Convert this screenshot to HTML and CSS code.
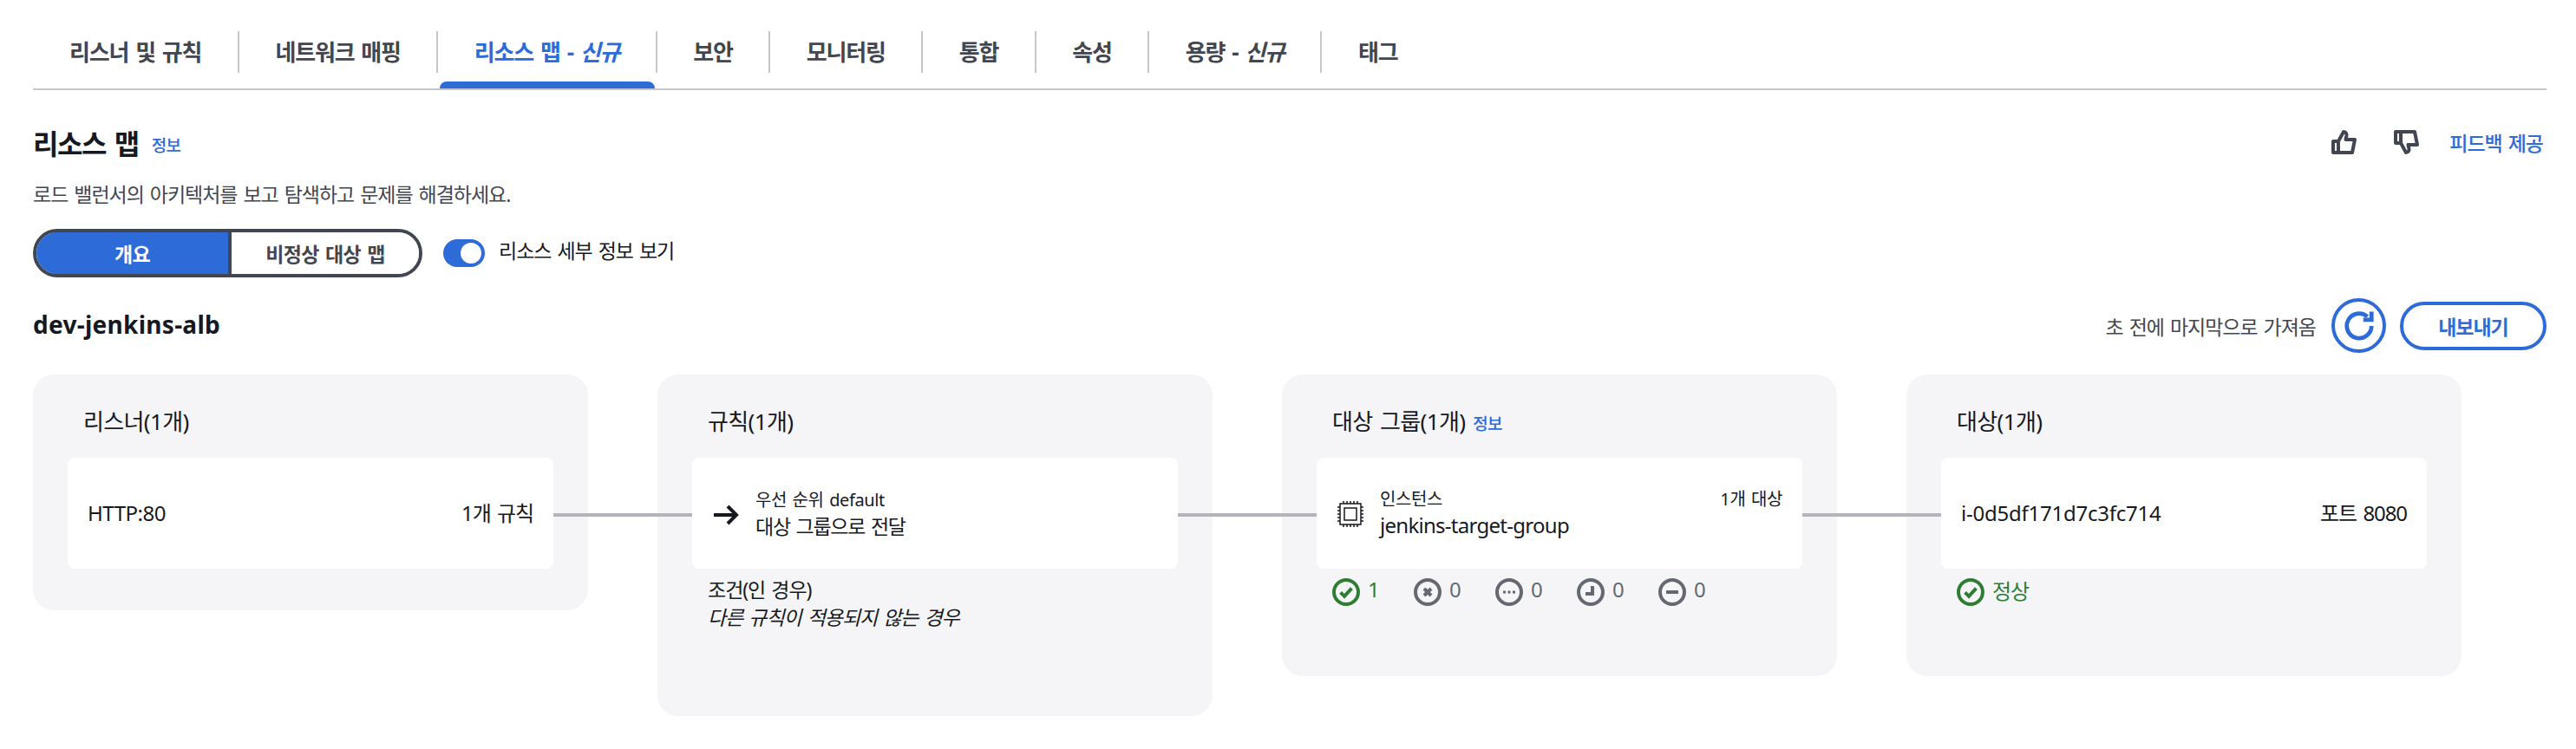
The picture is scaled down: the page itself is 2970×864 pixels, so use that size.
FILE: index.html
```html
<!DOCTYPE html>
<html lang="ko">
  <head>
    <meta charset="UTF-8" />
    <title>리소스 맵</title>
    <link rel="stylesheet" href="styles.css">
  </head>

  <body>
    <div class="page">
      <div class="tabs">
        <a class="tab">리스너 및 규칙</a>
        <a class="tab">네트워크 매핑</a>
        <a class="tab active">리소스 맵 - <em>신규</em></a>
        <a class="tab">보안</a>
        <a class="tab">모니터링</a>
        <a class="tab">통합</a>
        <a class="tab">속성</a>
        <a class="tab">용량 - <em>신규</em></a>
        <a class="tab">태그</a>
      </div>

      <div class="heading-row">
        <div class="heading">
          <h2>리소스 맵</h2>
          <a class="info">정보</a>
        </div>
        <div class="feedback">
          <svg class="icon-feedback" viewBox="0 0 16 16">
            <path d="M1.5 7.5h3V14h-3zM4.5 7.5 7.5 2c1.5 0 2 1.4 1.7 2.5L8.7 6.5H14L12.5 14h-8" />
          </svg>
          <svg class="icon-feedback" viewBox="0 0 16 16">
            <g transform="translate(0 16) scale(1 -1)">
              <path d="M1.5 7.5h3V14h-3zM4.5 7.5 7.5 2c1.5 0 2 1.4 1.7 2.5L8.7 6.5H14L12.5 14h-8" />
            </g>
          </svg>
          <a class="feedback-link">피드백 제공</a>
        </div>
      </div>

      <p class="description">로드 밸런서의 아키텍처를 보고 탐색하고 문제를 해결하세요.</p>

      <div class="controls">
        <div class="segments">
          <button class="segment selected">개요</button>
          <button class="segment">비정상 대상 맵</button>
        </div>
        <span class="toggle"><span class="toggle-knob"></span></span>
        <span class="toggle-label">리소스 세부 정보 보기</span>
      </div>

      <div class="lb-row">
        <h3>dev-jenkins-alb</h3>
        <div class="lb-actions">
          <span class="fetched">초 전에 마지막으로 가져옴</span>
          <button class="refresh">
            <svg viewBox="0 0 16 16">
              <path d="M14 8a6 6 0 1 1-2-4.5" />
              <path d="M14 1v4h-4" />
            </svg>
          </button>
          <button class="export">내보내기</button>
        </div>
      </div>

      <div class="map">
        <section class="card">
          <div class="card-title">리스너(1개)</div>
          <div class="node linked">
            <span class="latin">HTTP:80</span>
            <span>1개 규칙</span>
          </div>
        </section>

        <section class="card">
          <div class="card-title">규칙(1개)</div>
          <div class="node linked">
            <div class="node-main">
              <svg class="icon-arrow" viewBox="0 0 16 12">
                <path d="M1 6h13M9 1l5 5-5 5" />
              </svg>
              <div>
                <div class="node-small">우선 순위 default</div>
                <div class="node-action">대상 그룹으로 전달</div>
              </div>
            </div>
          </div>
          <div class="conditions">
            <div>조건(인 경우)</div>
            <div class="conditions-value">다른 규칙이 적용되지 않는 경우</div>
          </div>
        </section>

        <section class="card">
          <div class="card-title">대상 그룹(1개) <a class="info">정보</a></div>
          <div class="node linked node-top">
            <div class="node-main">
              <svg class="icon-chip" viewBox="0 0 32 32">
                <rect x="4" y="4" width="24" height="24" />
                <rect x="9" y="9" width="14" height="14" />
                <path d="M8 1v3M12 1v3M16 1v3M20 1v3M24 1v3M8 28v3M12 28v3M16 28v3M20 28v3M24 28v3M1 8h3M1 12h3M1 16h3M1 20h3M1 24h3M28 8h3M28 12h3M28 16h3M28 20h3M28 24h3" />
              </svg>
              <div>
                <div class="node-small">인스턴스</div>
                <div class="group-name">jenkins-target-group</div>
              </div>
            </div>
            <span class="node-small">1개 대상</span>
          </div>
          <div class="statuses">
            <div class="status ok">
              <svg viewBox="0 0 16 16"><circle cx="8" cy="8" r="7" /><path d="M4.8 8.2 7 10.4l4.2-4.6" /></svg>
              <span>1</span>
            </div>
            <div class="status">
              <svg viewBox="0 0 16 16"><circle cx="8" cy="8" r="7" /><path d="M6 6l4 4M10 6l-4 4" /></svg>
              <span>0</span>
            </div>
            <div class="status">
              <svg viewBox="0 0 16 16"><circle cx="8" cy="8" r="7" /><path class="dots" d="M4.5 8h1.5M7.25 8h1.5M10 8h1.5" /></svg>
              <span>0</span>
            </div>
            <div class="status">
              <svg viewBox="0 0 16 16"><circle cx="8" cy="8" r="7" /><path d="M9 4.5V9H5" /></svg>
              <span>0</span>
            </div>
            <div class="status">
              <svg viewBox="0 0 16 16"><circle cx="8" cy="8" r="7" /><path d="M4.5 8h7" /></svg>
              <span>0</span>
            </div>
          </div>
        </section>

        <section class="card">
          <div class="card-title">대상(1개)</div>
          <div class="node">
            <span class="instance-id">i-0d5df171d7c3fc714</span>
            <span>포트 8080</span>
          </div>
          <div class="statuses">
            <div class="status ok">
              <svg viewBox="0 0 16 16"><circle cx="8" cy="8" r="7" /><path d="M4.8 8.2 7 10.4l4.2-4.6" /></svg>
              <span>정상</span>
            </div>
          </div>
        </section>
      </div>
    </div>
  </body>
</html>
```

FILE: styles.css
```css
body {
  margin: 0;
  background: #ffffff;
  color: #16191f;
  font-family: "Noto Sans", "Noto Sans CJK KR", sans-serif;
  font-size: 23px;
}

/* the korean glyphs in the screenshot are narrower than Noto's */
body * {
  letter-spacing: -0.045em;
  word-spacing: 0.09em;
}

.page {
  padding: 0 34px 0 38px;
}

/* tabs */
.tabs {
  display: flex;
  padding: 36px 0 18px;
  border-bottom: 2px solid #c6c6cd;
}

.tab {
  position: relative;
  padding: 0 41.5px;
  line-height: 48px;
  font-size: 26px;
  font-weight: 700;
  color: #424650;
  border-left: 2px solid #c6c6cd;
  white-space: pre;
}

.tab:first-child {
  border-left: none;
  padding-left: 42px;
}

.tab.active {
  color: #2d6bd9;
}

.tab.active::after {
  content: "";
  position: absolute;
  left: 2px;
  right: 1px;
  bottom: -18px;
  height: 8px;
  border-radius: 8px 8px 0 0;
  background: #2d6bd9;
}

/* heading */
.heading-row {
  display: flex;
  justify-content: space-between;
  align-items: center;
  height: 40px;
  margin-top: 40px;
}

.heading {
  display: flex;
  align-items: center;
  gap: 15px;
}

h2 {
  margin: 0;
  font-size: 32px;
  font-weight: 700;
}

.info {
  color: #2d6bd9;
  font-size: 19px;
  font-weight: 500;
  margin-top: 6px;
}

.feedback {
  display: flex;
  align-items: center;
  padding-right: 4px;
}

.icon-feedback {
  width: 32px;
  height: 32px;
  margin-right: 40px;
  fill: none;
  stroke: #424650;
  stroke-width: 2;
  stroke-linejoin: round;
}

.icon-feedback + .icon-feedback {
  margin-right: 33px;
}

.feedback-link {
  color: #2d6bd9;
  font-size: 23px;
  font-weight: 500;
}

.description {
  margin: 24px 0 0;
  line-height: 32px;
  color: #424650;
}

/* segmented control and toggle */
.controls {
  display: flex;
  align-items: center;
  margin-top: 24px;
}

.segments {
  display: flex;
  width: 449px;
  height: 56px;
  box-sizing: border-box;
  border: 4px solid #424650;
  border-radius: 28px;
  overflow: hidden;
}

.segment {
  border: none;
  background: #ffffff;
  color: #424650;
  font-family: inherit;
  font-size: 23px;
  font-weight: 700;
  letter-spacing: -0.03em;
  padding: 0;
  flex: 1;
}

.segment.selected {
  flex: none;
  width: 221px;
  margin-right: 4px;
  background: #2d6bd9;
  color: #ffffff;
  box-shadow: 4px 0 0 #424650;
}

.toggle {
  display: flex;
  justify-content: flex-end;
  align-items: center;
  width: 48px;
  height: 32px;
  box-sizing: border-box;
  padding-right: 4px;
  margin-left: 24px;
  border-radius: 16px;
  background: #2d6bd9;
}

.toggle-knob {
  width: 24px;
  height: 24px;
  border-radius: 50%;
  background: #ffffff;
}

.toggle-label {
  margin: -8px 0 0 16px;
}

/* load balancer row */
.lb-row {
  display: flex;
  justify-content: space-between;
  align-items: center;
  margin-top: 24px;
}

h3 {
  margin: 0 0 4px;
  font-size: 28px;
  font-weight: 700;
  letter-spacing: 0.01em;
}

.lb-actions {
  display: flex;
  align-items: center;
}

.fetched {
  color: #424650;
}

.refresh {
  display: flex;
  align-items: center;
  justify-content: center;
  width: 63px;
  height: 63px;
  margin-left: 18px;
  padding: 0;
  border: 4px solid #2d6bd9;
  border-radius: 50%;
  background: #ffffff;
}

.refresh svg {
  width: 38px;
  height: 38px;
  fill: none;
  stroke: #2d6bd9;
  stroke-width: 2;
}

.export {
  width: 169px;
  height: 56px;
  margin-left: 16px;
  padding: 0;
  border: 4px solid #2d6bd9;
  border-radius: 28px;
  background: #ffffff;
  color: #2d6bd9;
  font-family: inherit;
  font-size: 23px;
  font-weight: 700;
}

/* resource map */
.map {
  display: grid;
  grid-template-columns: repeat(4, 640px);
  gap: 80px;
  align-items: start;
  margin-top: 25px;
}

.card {
  padding: 0 40px 48px;
  border-radius: 24px;
  background: #f5f5f7;
}

.card-title {
  display: flex;
  align-items: center;
  gap: 9px;
  height: 86px;
  padding: 10px 18px 0;
  font-size: 26px;
  letter-spacing: -0.025em;
}

.node {
  position: relative;
  display: flex;
  justify-content: space-between;
  align-items: center;
  height: 128px;
  padding: 0 23px;
  box-sizing: border-box;
  border-radius: 8px;
  background: #ffffff;
  font-size: 24px;
  line-height: 30px;
}

.node.linked::after {
  content: "";
  position: absolute;
  left: 100%;
  top: 64px;
  width: 160px;
  height: 4px;
  background: #b4b4bb;
}

.node-top {
  align-items: flex-start;
  padding-top: 33px;
}

.node-main {
  display: flex;
  align-items: center;
  gap: 18px;
}

.node-small {
  font-size: 20px;
  letter-spacing: -0.02em;
}

.node-action {
  font-size: 23px;
  letter-spacing: -0.055em;
}

.latin {
  letter-spacing: -0.02em;
}

.group-name {
  letter-spacing: -0.03em;
}

.instance-id {
  letter-spacing: -0.01em;
}

.icon-arrow {
  width: 32px;
  height: 24px;
  margin-top: 4px;
  fill: none;
  stroke: #16191f;
  stroke-width: 2;
}

.icon-chip {
  width: 32px;
  height: 32px;
  margin-top: 4px;
  fill: none;
  stroke: #16191f;
  stroke-width: 1.5;
}

.conditions {
  padding: 8px 18px 50px;
  line-height: 32px;
}

.conditions-value {
  font-style: italic;
}

.statuses {
  display: flex;
  padding: 11px 18px 33px;
}

.status {
  display: flex;
  gap: 9px;
  width: 94px;
  color: #656871;
  font-size: 24px;
  white-space: pre;
}

.status svg {
  width: 32px;
  height: 32px;
  flex: none;
  fill: none;
  stroke: #656871;
  stroke-width: 2;
}

.status span {
  margin-top: -4px;
}

.status .dots {
  stroke-width: 1.6;
}

.status.ok {
  color: #2e7d32;
}

.status.ok svg {
  stroke: #2e7d32;
}
```
